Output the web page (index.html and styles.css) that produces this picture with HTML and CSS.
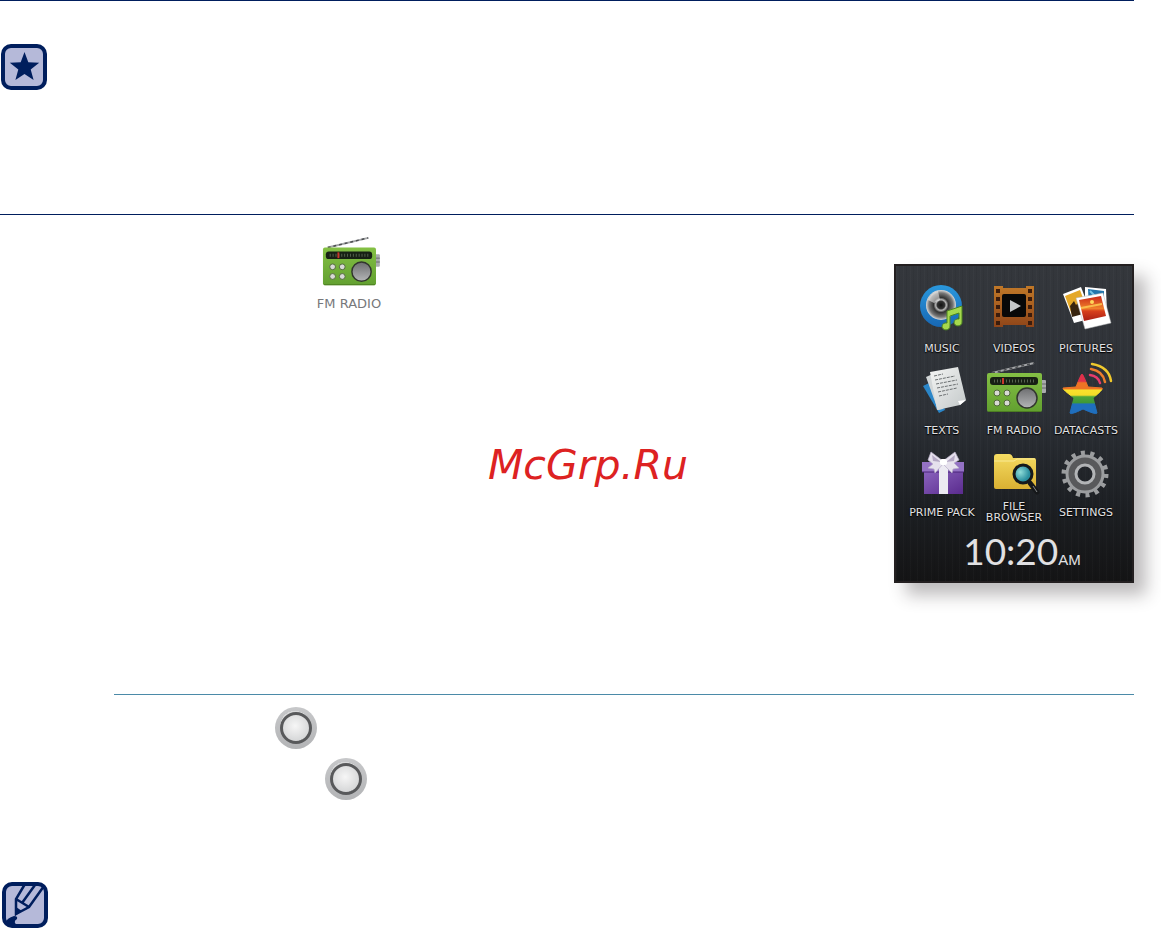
FILE: index.html
```
<!DOCTYPE html>
<html lang="en">
<head>
  <meta charset="UTF-8" />
  <meta name="viewport" content="width=device-width, initial-scale=1" />
  <title>FM Radio</title>
  <link rel="stylesheet" href="styles.css">
</head>
<body>

<!-- Shared icons -->
<svg class="defs" width="0" height="0" aria-hidden="true">
  <defs>
    <linearGradient id="green" x1="0" y1="0" x2="0" y2="1"><stop offset="0" stop-color="#84c044"/><stop offset="1" stop-color="#62a030"/></linearGradient>
    <linearGradient id="metal" x1="0" y1="0" x2="0" y2="1"><stop offset="0" stop-color="#6d6e70"/><stop offset="1" stop-color="#b5b6b8"/></linearGradient>
    <linearGradient id="blue" x1="0" y1="0" x2="0" y2="1"><stop offset="0" stop-color="#2a98dd"/><stop offset="1" stop-color="#1767b4"/></linearGradient>
    <radialGradient id="cone"><stop offset="0" stop-color="#111"/><stop offset=".25" stop-color="#333"/><stop offset=".35" stop-color="#bbb"/><stop offset=".5" stop-color="#333"/><stop offset=".8" stop-color="#777"/><stop offset="1" stop-color="#ddd"/></radialGradient>
    <linearGradient id="film" x1="0" y1="0" x2="0" y2="1"><stop offset="0" stop-color="#c07828"/><stop offset="1" stop-color="#8f4519"/></linearGradient>
    <linearGradient id="sunset" x1="0" y1="0" x2="0" y2="1"><stop offset="0" stop-color="#c8281a"/><stop offset=".5" stop-color="#f0802a"/><stop offset=".6" stop-color="#d8401c"/><stop offset="1" stop-color="#a81d14"/></linearGradient>
    <linearGradient id="paper" x1="0" y1="0" x2="1" y2="1"><stop offset="0" stop-color="#f4f5f4"/><stop offset="1" stop-color="#c3c8c9"/></linearGradient>
    <linearGradient id="violet" x1="0" y1="0" x2="1" y2="1"><stop offset="0" stop-color="#8a63bd"/><stop offset="1" stop-color="#5a2b8e"/></linearGradient>
    <linearGradient id="folder" x1="0" y1="0" x2="0" y2="1"><stop offset="0" stop-color="#f5dc62"/><stop offset="1" stop-color="#d9b032"/></linearGradient>
    <radialGradient id="lens" cx=".35" cy=".4"><stop offset="0" stop-color="#8fdcd8"/><stop offset="1" stop-color="#2b8f9f"/></radialGradient>
    <linearGradient id="rainbow" x1="0" y1="13" x2="0" y2="54" gradientUnits="userSpaceOnUse">
      <stop offset=".2" stop-color="#e0304a"/><stop offset=".24" stop-color="#ee7424"/>
      <stop offset=".38" stop-color="#ee7424"/><stop offset=".42" stop-color="#f8e22c"/>
      <stop offset=".54" stop-color="#f4dc28"/><stop offset=".58" stop-color="#4ea63a"/>
      <stop offset=".72" stop-color="#3f9838"/><stop offset=".76" stop-color="#1f6fbe"/>
    </linearGradient>
  </defs>
  <symbol id="radio" viewBox="0 0 64 56">
    <rect x="58" y="20" width="6" height="13" rx="1" fill="#a9abad"/>
    <path d="M58 24h6M58 28h6" stroke="#66686a"/>
    <path d="M10 13L52 3" stroke="#a5a7a9" stroke-width="2"/>
    <path d="M10 13L52 3" stroke="#4b4d50" stroke-width="1.5" stroke-dasharray="3 3"/>
    <rect x="5" y="13" width="55" height="39" rx="2" fill="url(#green)"/>
    <path d="M6 51.500h53" stroke="#4d7f22"/>
    <rect x="8" y="17" width="48" height="8" rx="3" fill="#172014"/>
    <path d="M12 21h41" stroke="#56634f" stroke-width="3" stroke-dasharray="1 2"/>
    <path d="M21 18v6" stroke="#c8392b" stroke-width="2"/>
    <g fill="#d8dad6" stroke="#52683d">
      <circle cx="15" cy="33" r="3"/><circle cx="25" cy="33" r="3"/>
      <circle cx="15" cy="43" r="3"/><circle cx="25" cy="43" r="3"/>
    </g>
    <circle cx="45" cy="38" r="10" fill="url(#metal)" stroke="#31352e" stroke-width="1.500"/>
  </symbol>
</svg>

<main class="page">
  <section class="note">
    <svg class="badge" viewBox="0 0 46 46" role="img" aria-label="Note">
      <rect x="2" y="2" width="42" height="42" rx="8" fill="#b5b9d9" stroke="#001e5d" stroke-width="4"/>
      <path fill="#001e5d" d="M23.500 8l3.800 10.200 10.900.5-8.500 6.800 2.900 10.500-9.100-6-9.100 6 2.900-10.500-8.500-6.800 10.900-.5z"/>
    </svg>
  </section>

  <section class="intro">
    <figure class="feature">
      <svg class="feature-icon" aria-hidden="true"><use href="#radio"/></svg>
      <figcaption>FM RADIO</figcaption>
    </figure>

    <p class="watermark">McGrp.Ru</p>

    <div class="device">
      <div class="apps">
        <button class="app">
          <svg viewBox="0 0 64 56" aria-hidden="true">
            <circle cx="31" cy="28" r="21" fill="url(#blue)"/>
            <circle cx="31" cy="27" r="15" fill="url(#cone)"/>
            <path d="M18 22a15 15 0 0 1 10-9l2 9-6 3z" fill="#fff" opacity=".5"/>
            <path d="M37 33l15-5v16a4 3.500 0 1 1-3-3v-6l-9 3v10a4 3.500 0 1 1-3-3z" fill="#a5d84e" stroke="#4c8521"/>
          </svg>
          <span>MUSIC</span>
        </button>
        <button class="app">
          <svg viewBox="0 0 64 56" aria-hidden="true">
            <path d="M12 8h9v2h23V8h8v41h-8v-2H21v2h-9z" fill="url(#film)"/>
            <path d="M16 11v37M48 11v37" stroke="#3b1c0d" stroke-width="4" stroke-dasharray="4 4"/>
            <rect x="20" y="16" width="24" height="23" rx="2" fill="#080808"/>
            <path d="M28 22l11 6-11 6z" fill="#c4c6c8"/>
          </svg>
          <span>VIDEOS</span>
        </button>
        <button class="app">
          <svg viewBox="0 0 64 56" aria-hidden="true">
            <path d="M31 9l21 2 1 25-22-3z" fill="#fff"/>
            <path d="M34 11l16 2v20l-15-3z" fill="#2276ad"/>
            <path d="M36 13l12 12" stroke="#75c4e5" stroke-width="2"/>
            <path d="M9 16l18-7 12 31-19 5z" fill="#fff"/>
            <path d="M11 18l15-6 8 21-16 4z" fill="#e4a828"/>
            <path d="M16 28l4-5 2 4 4-4 3 13-11 3z" fill="#38250f"/>
            <path d="M22 20l27-5 8 30-26 6z" fill="#fff" stroke="#b5b7b9" stroke-width=".5"/>
            <path d="M25 22l22-4 5 20-22 5z" fill="url(#sunset)"/>
            <path d="M27 30l21-4" stroke="#f9bb4a" stroke-width="2"/>
            <circle cx="38" cy="24" r="2" fill="#ffd659"/>
          </svg>
          <span>PICTURES</span>
        </button>

        <button class="app">
          <svg viewBox="0 0 64 56" aria-hidden="true">
            <path d="M13 26l12-6 10 30-6 3z" fill="#2b86c8"/>
            <path d="M16 17l9-4 8 36-5 1z" fill="#d2d6d7"/>
            <path d="M20 12l28-5 8 33-6 5-23 5z" fill="url(#paper)"/>
            <path d="M56 40l-8 1 2 4z" fill="#fff"/>
            <path d="M24 16l9-2M25 20l20-4M26 24l21-4M27 28l21-4M28 32l19-4M29 36l9-2" stroke="#6c7072" stroke-dasharray="3 1"/>
          </svg>
          <span>TEXTS</span>
        </button>
        <button class="app">
          <svg viewBox="0 0 64 56" aria-hidden="true"><use href="#radio"/></svg>
          <span>FM RADIO</span>
        </button>
        <button class="app">
          <svg viewBox="0 0 64 56" aria-hidden="true">
            <path d="M28 14q1 0 6 13l14 1q2 1-9 10l4 15q-1 2-14-4-12 6-13 4l4-15Q8 29 9 28l13-1q5-13 6-13z" fill="url(#rainbow)" stroke="url(#rainbow)" stroke-linejoin="round"/>
            <g fill="none" stroke-width="2.500" stroke-linecap="round">
              <path d="M36 15q8 1 10 8" stroke="#e63c6c"/>
              <path d="M37 9q12 2 14 13" stroke="#ee7d2b"/>
              <path d="M38 4q17 3 19 17" stroke="#f0c92d"/>
            </g>
          </svg>
          <span>DATACASTS</span>
        </button>

        <button class="app">
          <svg viewBox="0 0 64 56" aria-hidden="true">
            <path d="M14 29h39v23H14z" fill="url(#violet)"/>
            <path d="M12 20h42v10H12z" fill="#9472c4"/>
            <path d="M12 30h42" stroke="#4a247a"/>
            <path d="M29 21h9v31h-9z" fill="#eceaf2"/>
            <path d="M33 19l-12-9-3 8 5 4-5 4 6 1 1 4 8-9 9 9 1-4 6-1-5-5 5-3-4-8z" fill="#e6e1ed" stroke="#b9b0c8" stroke-width=".7"/>
            <path d="M22 13l9 7-8-1zM45 13l-9 7 8-1z" fill="#b4a8c4"/>
            <rect x="30" y="17" width="7" height="6" rx="2" fill="#fff"/>
          </svg>
          <span>PRIME PACK</span>
        </button>
        <button class="app">
          <svg viewBox="0 0 64 56" aria-hidden="true">
            <path d="M12 15q0-3 3-3h12q3 0 4 4h21q2 0 2 2v27q0 2-2 2H14q-2 0-2-2z" fill="url(#folder)"/>
            <path d="M12 19h20l3-2h18" stroke="#f9ea94" fill="none"/>
            <path d="M48 41l7 9" stroke="#16181a" stroke-width="5" stroke-linecap="round"/>
            <path d="M51 44l4 6" stroke="#85888a"/>
            <circle cx="41" cy="32" r="9" fill="url(#lens)" stroke="#15191b" stroke-width="3"/>
          </svg>
          <span>FILE<br>BROWSER</span>
        </button>
        <button class="app">
          <svg viewBox="0 0 64 56" aria-hidden="true">
            <circle cx="31" cy="32" r="21" fill="none" stroke="#9b9d9f" stroke-width="5" stroke-dasharray="4 5.420"/>
            <circle cx="31" cy="32" r="14" fill="none" stroke="#58595b" stroke-width="9"/>
            <circle cx="31" cy="32" r="18" fill="none" stroke="#9b9d9f" stroke-width="3"/>
            <circle cx="31" cy="32" r="9" fill="none" stroke="#b2b4b6" stroke-width="3"/>
          </svg>
          <span>SETTINGS</span>
        </button>
      </div>
      <p class="clock">10:20<small>AM</small></p>
    </div>
  </section>

  <section class="controls">
    <button class="key key-first" aria-label="Select"></button>
    <button class="key key-second" aria-label="Back"></button>
  </section>

  <section class="tip">
    <svg class="badge" viewBox="0 0 46 46" role="img" aria-label="Tip">
      <rect x="2" y="2" width="42" height="42" rx="8" fill="#b5b9d9" stroke="#001e5d" stroke-width="4"/>
      <path d="M23 2l-9 15v15l13-7L42 4M33 3L20 21M14 17l13 8" fill="none" stroke="#001e5d" stroke-width="2.500"/>
      <path d="M14 25l6 4-7 5zM3 41q2-5 9-7 4 0 3 3-5 3 1 7H8z" fill="#001e5d"/>
    </svg>
  </section>
</main>

</body>
</html>
```

FILE: styles.css
```
* { margin: 0; padding: 0; box-sizing: border-box; }

body {
  font-family: "DejaVu Sans", sans-serif;
  background: #fff;
}

button {
  border: none;
  background: none;
  font: inherit;
  cursor: pointer;
}

.defs {
  position: absolute;
}

.page {
  padding-right: 27px;
}

.badge {
  display: block;
  width: 46px;
  height: 46px;
}

/* Note at the top */
.note {
  min-height: 214px;
  padding: 43px 1px;
  border-top: 1px solid #001e5d;
}

/* Feature icon, name and device screen */
.intro {
  display: grid;
  grid-template-columns: 316px 172px 1fr auto;
  min-height: 480px;
  border-top: 1px solid #001e5d;
}

.feature {
  grid-column: 2;
  width: 66px;
  padding-top: 20px;
  text-align: center;
}

.feature-icon {
  display: block;
  width: 62px;
  height: 54px;
  margin: 0 auto;
}

.feature figcaption {
  margin-top: 7px;
  font-size: 13px;
  line-height: 16px;
  color: #77787b;
  white-space: nowrap;
}

.watermark {
  padding-top: 226px;
  font-size: 41px;
  font-style: oblique;
  line-height: 48px;
  color: #dd2222;
}

.device {
  align-self: start;
  width: 240px;
  margin-top: 49px;
  padding: 12px 10px 1px;
  border: 2px solid #231f20;
  color: #e1e1e3;
  background:
    repeating-linear-gradient(90deg, rgba(255,255,255,0.02) 0 1px, transparent 1px 3px, rgba(0,0,0,0.05) 3px 4px, transparent 4px 7px),
    linear-gradient(#34373c, #2d3137 45%, #1d2024 75%, #141415);
  box-shadow: 12px 12px 16px rgba(35,31,32,0.3);
}

.apps {
  display: grid;
  grid-template-columns: repeat(3, 72px);
  row-gap: 1px;
}

.app {
  display: flex;
  flex-direction: column;
  align-items: center;
  gap: 3px;
  color: inherit;
}

.app svg {
  width: 64px;
  height: 56px;
}

.app span {
  display: flex;
  align-items: center;
  height: 22px;
  font-size: 11px;
  line-height: 11px;
  white-space: nowrap;
  text-shadow: 0 0 2px #000, 0 1px 1px #000;
}

.clock {
  margin-top: 8px;
  padding-left: 16px;
  font-family: Lato, sans-serif;
  font-size: 37px;
  font-weight: 400;
  line-height: 40px;
  text-align: center;
}

.clock small {
  font-family: "Liberation Sans", sans-serif;
  font-size: 15px;
}

/* Round keys */
.controls {
  display: flex;
  flex-direction: column;
  gap: 9px;
  min-height: 188px;
  margin-left: 114px;
  padding-top: 12px;
  border-top: 1px solid #4b8aa8;
}

.key {
  width: 42px;
  height: 42px;
  border-radius: 50%;
  background: radial-gradient(circle at 48% 45%, #f6f6f6 0, #d8d9da 14px, #d8d9da 15px, transparent 15px), linear-gradient(#c7c8ca, #b3b4b6);
  position: relative;
}

.key::after {
  content: "";
  position: absolute;
  inset: 5px;
  border: 3px solid #58595b;
  border-radius: 50%;
}

.key-first { margin-left: 161px; }
.key-second { margin-left: 211px; }

.tip {
  padding-left: 2px;
}
```
